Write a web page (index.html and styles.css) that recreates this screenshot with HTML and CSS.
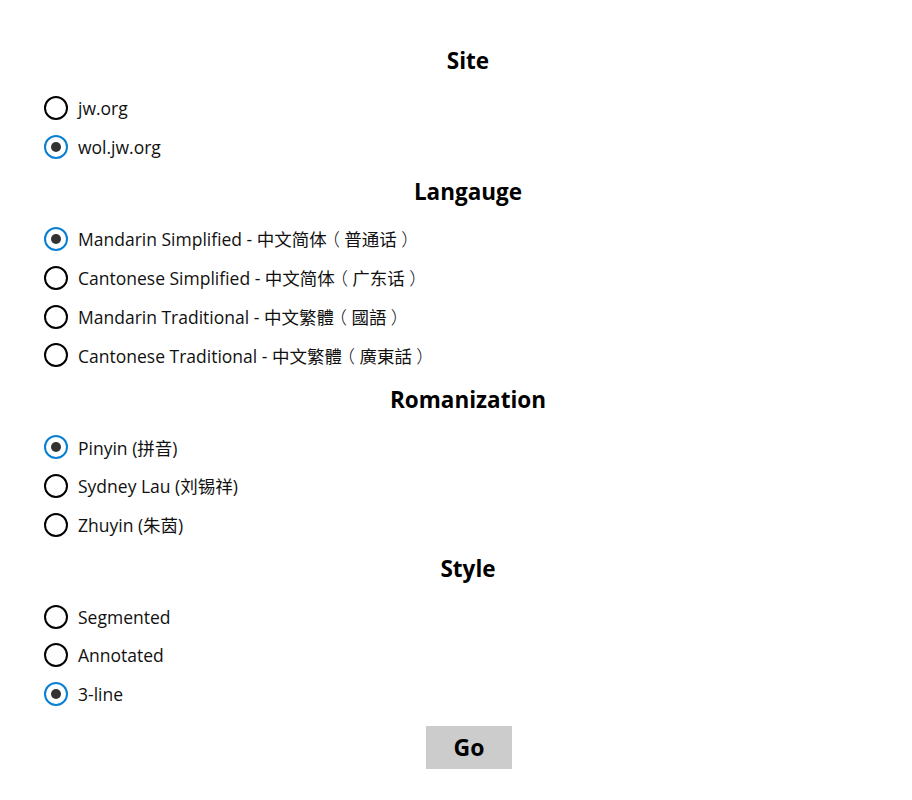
FILE: index.html
```html
<!DOCTYPE html>
<html>
<head>
<meta charset="utf-8">
<link rel="stylesheet" href="styles.css">
</head>
<body>
<form class="page">
  <section class="group">
    <h2 class="title">Site</h2>
    <label class="opt"><input type="radio" name="site"><span>jw.org</span></label>
    <label class="opt"><input type="radio" name="site" checked><span>wol.jw.org</span></label>
  </section>
  <section class="group">
    <h2 class="title">Langauge</h2>
    <label class="opt"><input type="radio" name="lang" checked><span>Mandarin Simplified - 中文简体<span class="paren">（</span>普通话<span class="paren">）</span></span></label>
    <label class="opt"><input type="radio" name="lang"><span>Cantonese Simplified - 中文简体<span class="paren">（</span>广东话<span class="paren">）</span></span></label>
    <label class="opt"><input type="radio" name="lang"><span>Mandarin Traditional - 中文繁體<span class="paren">（</span>國語<span class="paren">）</span></span></label>
    <label class="opt"><input type="radio" name="lang"><span>Cantonese Traditional - 中文繁體<span class="paren">（</span>廣東話<span class="paren">）</span></span></label>
  </section>
  <section class="group">
    <h2 class="title">Romanization</h2>
    <label class="opt"><input type="radio" name="rom" checked><span>Pinyin (拼音)</span></label>
    <label class="opt"><input type="radio" name="rom"><span>Sydney Lau (刘锡祥)</span></label>
    <label class="opt"><input type="radio" name="rom"><span>Zhuyin (朱茵)</span></label>
  </section>
  <section class="group">
    <h2 class="title">Style</h2>
    <label class="opt"><input type="radio" name="style"><span>Segmented</span></label>
    <label class="opt"><input type="radio" name="style"><span>Annotated</span></label>
    <label class="opt"><input type="radio" name="style" checked><span>3-line</span></label>
  </section>
  <div class="actions"><button type="button" class="go">Go</button></div>
</form>
</body>
</html>
```
FILE: styles.css
```css
html, body {
  margin: 0;
  padding: 0;
  background: #fff;
}
body {
  font-family: "Open Sans", "Noto Sans CJK SC", sans-serif;
  color: #000;
  text-spacing-trim: space-all;
}
.page {
  padding: 36px 20px 0 44px;
}
.group {
  display: flex;
  flex-direction: column;
}
.title {
  margin: 10px 0 13px;
  line-height: 30px;
  font-size: 22.5px;
  font-weight: 700;
  text-align: center;
}
.opt {
  display: flex;
  align-items: center;
  height: 38.8px;
  font-size: 17.5px;
  gap: 10px;
  color: #111;
}
.paren {
  display: inline-block;
  font-feature-settings: "halt";
  padding: 0 0.25em;
  font-weight: 300;
}
.opt input {
  appearance: none;
  -webkit-appearance: none;
  margin: 0;
  width: 24px;
  height: 24px;
  border: 2px solid #000;
  border-radius: 50%;
  box-sizing: border-box;
  display: flex;
  align-items: center;
  justify-content: center;
  flex: none;
}
.opt input:checked {
  border-color: #0a7fd2;
}
.opt input:checked::after {
  content: "";
  width: 10px;
  height: 10px;
  border-radius: 50%;
  background: #333;
}
.actions {
  display: flex;
  justify-content: center;
  margin-top: 12px;
  padding-left: 2px;
}
.go {
  width: 86px;
  height: 43px;
  border: none;
  background: #ccc;
  font-family: "Open Sans", sans-serif;
  font-size: 23px;
  font-weight: 700;
  color: #000;
  padding: 0;
}
```
